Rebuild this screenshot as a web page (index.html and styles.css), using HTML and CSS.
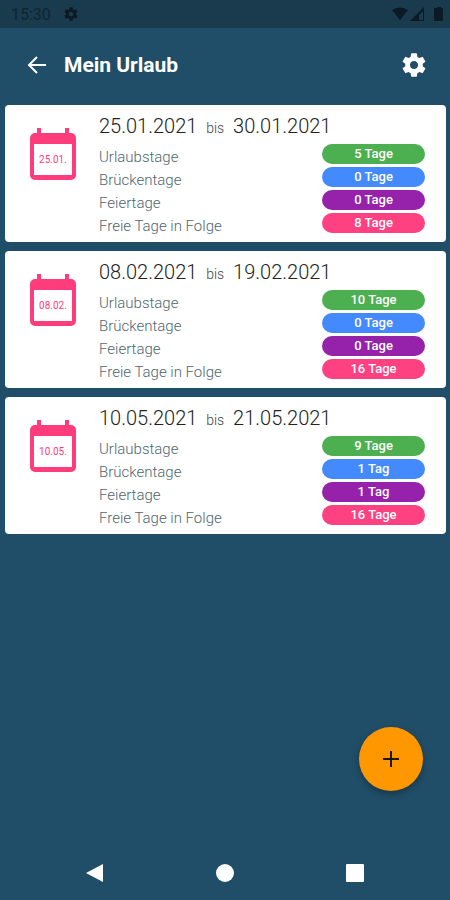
FILE: index.html
```html
<!DOCTYPE html>
<html lang="de">
<head>
<meta charset="utf-8">
<meta name="viewport" content="width=device-width, initial-scale=1">
<title>Mein Urlaub</title>
<link rel="stylesheet" href="styles.css">
</head>
<body>
<svg class="defs" aria-hidden="true">
  <symbol id="gear" viewBox="0 0 24 24"><path d="M19.43 12.98c.04-.32.07-.64.07-.98s-.03-.66-.07-.98l2.11-1.65c.19-.15.24-.42.12-.64l-2-3.46c-.12-.22-.39-.3-.61-.22l-2.49 1c-.52-.4-1.08-.73-1.69-.98l-.38-2.65A.488.488 0 0 0 14 2h-4c-.25 0-.46.18-.49.42l-.38 2.65c-.61.25-1.17.59-1.69.98l-2.49-1c-.23-.09-.49 0-.61.22l-2 3.46c-.13.22-.07.49.12.64l2.11 1.65c-.04.32-.07.65-.07.98s.03.66.07.98l-2.11 1.65c-.19.15-.24.42-.12.64l2 3.46c.12.22.39.3.61.22l2.49-1c.52.4 1.08.73 1.69.98l.38 2.65c.03.24.24.42.49.42h4c.25 0 .46-.18.49-.42l.38-2.65c.61-.25 1.17-.59 1.69-.98l2.49 1c.23.09.49 0 .61-.22l2-3.46c.12-.22.07-.49-.12-.64l-2.11-1.65zM12 15.5c-1.93 0-3.5-1.57-3.5-3.5s1.57-3.5 3.5-3.5 3.5 1.57 3.5 3.5-1.57 3.5-3.5 3.5z"/></symbol>
  <symbol id="calendar" viewBox="0 0 46 52"><path fill-rule="evenodd" d="M7 0h4v5h24V0h4v5h2a5 5 0 0 1 5 5v37a5 5 0 0 1-5 5H5a5 5 0 0 1-5-5V10a5 5 0 0 1 5-5h2zM4 16v31h38V16z"/></symbol>
</svg>
<div class="status">
  <span class="clock">15:30</span>
  <svg class="status-gear"><use href="#gear"/></svg>
  <svg class="signals" viewBox="0 0 52 16" aria-hidden="true">
    <path d="M0 4Q8-1 16 4L8 14z"/>
    <path d="M32 1v14H18zm-1 4-4 4v5h4z" fill-rule="evenodd"/>
    <path d="M42 3q0-1 1-1h2V1h4v1h1q1 0 1 1v11q0 1-1 1h-7q-1 0-1-1z"/>
  </svg>
</div>
<header class="bar">
  <button class="icon-button" aria-label="Zurück"><svg class="arrow" viewBox="0 0 20 20"><path d="M19 10H2M10 2l-8 8 8 8"/></svg></button>
  <h1>Mein Urlaub</h1>
  <button class="icon-button" aria-label="Einstellungen"><svg class="gear"><use href="#gear"/></svg></button>
</header>
<main class="list">
  <article class="card">
    <div class="cal"><svg><use href="#calendar"/></svg><span>25.01.</span></div>
    <div class="info">
      <h2>25.01.2021 <small>bis</small> 30.01.2021</h2>
      <dl>
        <dt>Urlaubstage</dt><dd class="green">5 Tage</dd>
        <dt>Brückentage</dt><dd class="blue">0 Tage</dd>
        <dt>Feiertage</dt><dd class="purple">0 Tage</dd>
        <dt>Freie Tage in Folge</dt><dd class="pink">8 Tage</dd>
      </dl>
    </div>
  </article>
  <article class="card">
    <div class="cal"><svg><use href="#calendar"/></svg><span>08.02.</span></div>
    <div class="info">
      <h2>08.02.2021 <small>bis</small> 19.02.2021</h2>
      <dl>
        <dt>Urlaubstage</dt><dd class="green">10 Tage</dd>
        <dt>Brückentage</dt><dd class="blue">0 Tage</dd>
        <dt>Feiertage</dt><dd class="purple">0 Tage</dd>
        <dt>Freie Tage in Folge</dt><dd class="pink">16 Tage</dd>
      </dl>
    </div>
  </article>
  <article class="card">
    <div class="cal"><svg><use href="#calendar"/></svg><span>10.05.</span></div>
    <div class="info">
      <h2>10.05.2021 <small>bis</small> 21.05.2021</h2>
      <dl>
        <dt>Urlaubstage</dt><dd class="green">9 Tage</dd>
        <dt>Brückentage</dt><dd class="blue">1 Tag</dd>
        <dt>Feiertage</dt><dd class="purple">1 Tag</dd>
        <dt>Freie Tage in Folge</dt><dd class="pink">16 Tage</dd>
      </dl>
    </div>
  </article>
</main>
<button class="fab" aria-label="Urlaub hinzufügen"><svg viewBox="0 0 16 16"><path d="M8 0v16M0 8h16"/></svg></button>
<nav class="system">
  <button aria-label="Zurück"><svg viewBox="0 0 20 20"><path d="M1 10 18 1v18z"/></svg></button>
  <button aria-label="Startseite"><svg viewBox="0 0 20 20"><circle cx="10" cy="10" r="9"/></svg></button>
  <button aria-label="Übersicht"><svg viewBox="0 0 20 20"><rect x="1" y="1" width="18" height="18" rx="1"/></svg></button>
</nav>
</body>
</html>
```
FILE: styles.css
```css
* { box-sizing: border-box; }
body {
  margin: 0;
  min-height: 100vh;
  display: flex;
  flex-direction: column;
  background: #204e68;
  font-family: Roboto, "Liberation Sans", sans-serif;
}
button {
  border: 0;
  padding: 0;
  background: none;
  display: flex;
  align-items: center;
  justify-content: center;
}
.defs { position: absolute; width: 0; height: 0; }
.status {
  height: 28px;
  padding: 0 6px 0 11px;
  display: flex;
  align-items: center;
  gap: 12px;
  background: #1a3a4d;
  color: #0e2533;
  fill: #0b1a24;
}
.clock { font-size: 16px; }
.status-gear { width: 16px; height: 16px; }
.signals { width: 52px; height: 16px; margin-left: auto; }
.bar {
  height: 77px;
  padding: 0 21px 3px 22px;
  display: flex;
  align-items: center;
  gap: 12px;
  color: #fff;
}
h1 {
  flex: 1;
  margin: 0;
  font-size: 21px;
  font-weight: 700;
}
.icon-button { height: 30px; width: 30px; }
.arrow {
  width: 20px;
  height: 20px;
  fill: none;
  stroke: #fff;
  stroke-width: 2;
}
.gear { width: 28px; height: 28px; fill: #fff; }
.list {
  flex: 1;
  padding: 0 4px 0 5px;
  display: flex;
  flex-direction: column;
  gap: 9px;
}
.card {
  display: flex;
  gap: 23px;
  padding: 9px 21px 7px 25px;
  border-radius: 4px;
  background: #fff;
}
.cal {
  display: grid;
  place-items: center;
  align-self: flex-start;
  margin-top: 14px;
}
.cal svg, .cal span { grid-area: 1 / 1; }
.cal svg { width: 46px; height: 52px; fill: #ff3d7c; }
.cal span { padding-top: 10px; font-size: 10px; color: #ff3d7c; }
.info { flex: 1; }
h2 {
  margin: 0 0 5px;
  font-size: 20px;
  line-height: 24px;
  font-weight: 300;
  color: #222;
}
small { font-size: 14px; line-height: 14px; margin: 0 4px; color: #444; }
dl {
  margin: 0;
  display: grid;
  grid-template-columns: 1fr 103px;
  grid-auto-rows: 23px;
}
dt {
  padding-top: 4px;
  font-size: 15px;
  line-height: 20px;
  font-weight: 300;
  color: #4d6670;
}
dd {
  margin: 1px 0 2px;
  border-radius: 10px;
  font-size: 13px;
  line-height: 20px;
  font-weight: 500;
  text-align: center;
  color: #fff;
}
.green { background: #4caf50; }
.blue { background: #448aff; }
.purple { background: #9622ac; }
.pink { background: #ff4081; }
.fab {
  position: fixed;
  right: 27px;
  bottom: 109px;
  width: 64px;
  height: 64px;
  border-radius: 50%;
  background: #ff9800;
  box-shadow: 0 3px 7px rgba(0, 0, 0, .3);
}
.fab svg { width: 16px; height: 16px; stroke: #1c1606; stroke-width: 2; }
.system {
  height: 54px;
  padding: 0 30px;
  display: grid;
  grid-template-columns: repeat(3, 1fr);
}
.system svg { width: 20px; height: 20px; fill: #fff; }
```
